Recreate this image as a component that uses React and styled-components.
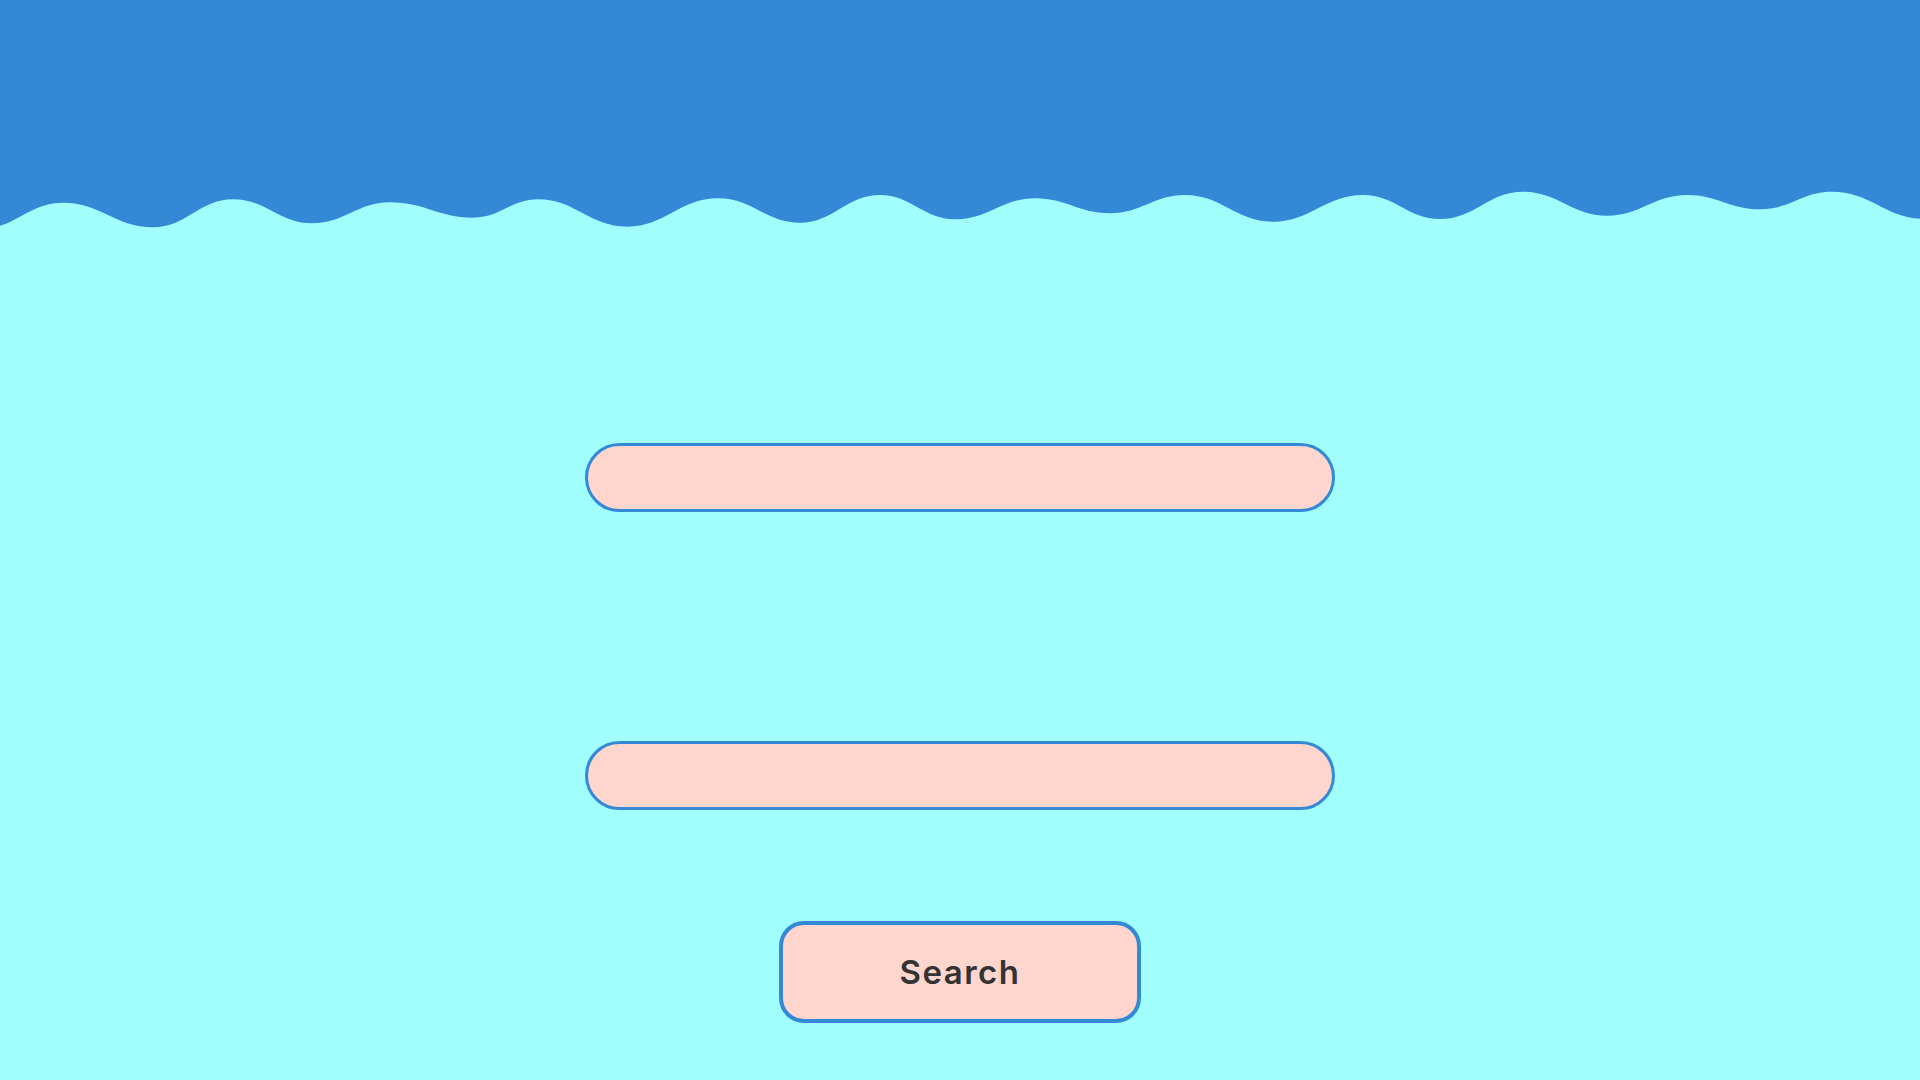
import React from 'react';
import styled, { createGlobalStyle } from 'styled-components';

const BLUE = '#3389d6';
const SEA = '#a1fefd';
const SAND = '#ffd6cd';

const GlobalStyle = createGlobalStyle`
  html, body {
    margin: 0;
    padding: 0;
    background: ${SEA};
  }
  body {
    font-family: Inter, "Open Sans", "Liberation Sans", sans-serif;
  }
`;

const Page = styled.div`
  min-height: 100vh;
  display: flex;
  flex-direction: column;
`;

const WaveSvg = styled.svg`
  display: block;
  width: 100%;
  height: 232px;
  flex-shrink: 0;
`;

const Form = styled.form`
  display: flex;
  flex-direction: column;
  align-items: center;
  padding-top: 211px;
`;

const Field = styled.input`
  box-sizing: border-box;
  width: 750px;
  height: 69px;
  margin: 0 0 ${p => p.$spaceAfter}px;
  padding: 0 32px;
  border: 3px solid ${BLUE};
  border-radius: 35px;
  background: ${SAND};
  font: inherit;
  font-size: 24px;
  color: #333;
  outline: none;
`;

const SearchButton = styled.button`
  box-sizing: border-box;
  width: 362px;
  height: 102px;
  border: 4px solid ${BLUE};
  border-radius: 25px;
  background: ${SAND};
  color: #333;
  font-family: Inter, "Open Sans", sans-serif;
  font-size: 33px;
  font-weight: 600;
  letter-spacing: 1.5px;
  cursor: pointer;
`;

// crests and troughs of the wave edge, traced from the design
const waveEdge = [
  [-20, 229], [63, 202.7], [153, 227.3], [233, 199.3], [312, 223.3],
  [390, 202.3], [473, 217.7], [538, 199.3], [627, 226.7], [718, 198.3],
  [800, 222.7], [880, 195], [955, 219.3], [1035, 198.3], [1110, 213.3],
  [1185, 195], [1273, 221.7], [1363, 195], [1440, 219], [1523, 191.7],
  [1607, 215.7], [1687, 195], [1760, 209.3], [1832, 191.7], [1925, 219],
];

const wavePath = () => {
  let d = `M${waveEdge[0][0]},0 L${waveEdge[0][0]},${waveEdge[0][1]}`;
  for (let i = 1; i < waveEdge.length; i++) {
    const [x0, y0] = waveEdge[i - 1];
    const [x1, y1] = waveEdge[i];
    const reach = (x1 - x0) * 0.42;
    d += ` C${x0 + reach},${y0} ${x1 - reach},${y1} ${x1},${y1}`;
  }
  const last = waveEdge[waveEdge.length - 1][0];
  return d + ` L${last},0 Z`;
};

const Wave = () => (
  <WaveSvg viewBox="0 0 1920 232" preserveAspectRatio="none">
    <path d={wavePath()} fill={BLUE} />
  </WaveSvg>
);

const App = () => (
  <Page>
    <GlobalStyle />
    <Wave />
    <Form onSubmit={e => e.preventDefault()}>
      <Field type="text" $spaceAfter={229} />
      <Field type="text" $spaceAfter={111} />
      <SearchButton type="submit">Search</SearchButton>
    </Form>
  </Page>
);

export default App;
